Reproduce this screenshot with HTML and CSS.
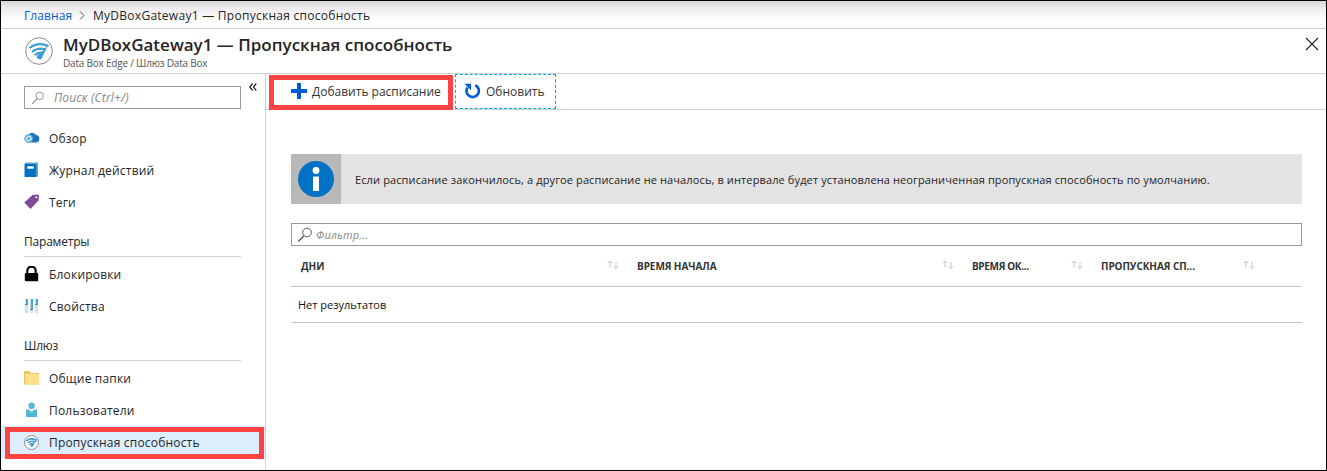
FILE: index.html
```html
<!DOCTYPE html>
<html lang="ru">
<head>
<meta charset="utf-8">
<title>MyDBoxGateway1 — Пропускная способность</title>
<link rel="stylesheet" href="styles.css">
</head>
<body>
<svg class="defs" width="0" height="0">
  <symbol id="search" viewBox="0 0 16 16"><circle cx="10" cy="5.5" r="4.3" fill="none" stroke="currentColor"/><path d="M7 8.8L1.3 14.5" fill="none" stroke="currentColor" stroke-width="1.3"/></symbol>
  <symbol id="gateway" viewBox="0 0 28 28"><circle cx="14" cy="14" r="13.3" fill="#fff" stroke="#8c8c8c"/><g fill="none" stroke="#3a9fd0" stroke-width="2.2"><path d="M4.500 11Q13 4.500 23.500 9"/><path d="M7 14.800Q13 9.800 21 12.500"/><path d="M9.800 18.200Q13.300 14.500 18.500 16"/></g><path d="M23 7.500L17.300 20.200a2.700 2.700 0 1 1-4.200-2.600l2.900-1.600z" fill="#3a9fd0"/></symbol>
  <symbol id="sort" viewBox="0 0 12 10"><path d="M3 7.5V1M.7 3.3L3 1l2.3 2.3M9 2v6.500M6.700 6.200L9 8.500l2.300-2.300" fill="none" stroke="#c8c8c8"/></symbol>
</svg>
<div class="window">
  <nav class="crumbs"><a class="home">Главная</a><svg class="sep" width="6" height="9" viewBox="0 0 6 9"><path d="M1 .5l4 4-4 4" fill="none" stroke="#555"/></svg><span class="here">MyDBoxGateway1 — Пропускная способность</span></nav>
  <header class="header">
    <svg class="logo" width="28" height="28"><use href="#gateway"/></svg>
    <div class="titles"><h1>MyDBoxGateway1 — Пропускная способность</h1><p>Data Box Edge / Шлюз Data Box</p></div>
    <svg class="close" width="14" height="14" viewBox="0 0 14 14"><path d="M1 1l12 12M13 1L1 13" stroke="#222" stroke-width="1.1"/></svg>
  </header>
  <div class="body">
    <aside class="side">
      <div class="searchrow">
        <div class="search"><svg width="14" height="14"><use href="#search"/></svg><span>Поиск (Ctrl+/)</span></div>
        <svg class="collapse" width="8" height="8" viewBox="0 0 8 8"><path d="M3.700.5L.8 4l2.900 3.500M7.300.5L4.400 4l2.900 3.500" fill="none" stroke="#222" stroke-width="1.200"/></svg>
      </div>
      <ul class="menu first">
        <li><svg width="16" height="16" viewBox="0 0 16 16"><path d="M5 12.500a4 4 0 0 1-.5-8A4.500 4.500 0 0 1 12 5a3.800 3.800 0 0 1 .3 7.500z" fill="#1e72bd"/><circle cx="4.700" cy="8.500" r="4.300" fill="#59b4d9"/><circle cx="4.700" cy="8.500" r="2.300" fill="none" stroke="#fff" stroke-width="1.500" stroke-dasharray="1.400 .7"/></svg><span>Обзор</span></li>
        <li><svg width="16" height="16" viewBox="0 0 16 16"><path d="M2.500.5H14V14.500H2.500z" fill="#68a5cf"/><path d="M.5 2h11.800v13H.5z" fill="#0072c6"/><path d="M.5 2L2.500.5V2z" fill="#0072c6"/><path d="M3.200 4.300h6.500v2.400H3.200z" fill="#fff"/></svg><span>Журнал действий</span></li>
        <li><svg width="16" height="16" viewBox="0 0 16 16"><path d="M.3 8.500L8.500 1l5-.5q1.500 0 1.500 1.500l-.5 4.500-8 8.500z" fill="#804998"/><circle cx="12.300" cy="3.200" r="1" fill="#fff"/></svg><span>Теги</span></li>
      </ul>
      <h2>Параметры</h2>
      <ul class="menu">
        <li><svg width="16" height="16" viewBox="0 0 16 16"><path d="M3.300 8V4.800a4.200 4.200 0 0 1 8.400 0V8" fill="none" stroke="#000" stroke-width="2.100"/><rect x=".8" y="7" width="13.400" height="8.300" rx="1" fill="#000"/></svg><span>Блокировки</span></li>
        <li><svg width="16" height="16" viewBox="0 0 16 16"><path d="M1 1H4v14H1zM6 1H9v14H6zM11 1H14v14H11z" fill="#c5e5f2"/><path d="M2 1h2v5H2zM7 1h2v10H7zM12 1h2v5h-2z" fill="#4aa8cf"/><path d="M1 6h3v1H1zM6 11h3v1H6zM11 6h3v1h-3z" fill="#808080"/></svg><span>Свойства</span></li>
      </ul>
      <h2>Шлюз</h2>
      <ul class="menu">
        <li><svg width="16" height="16" viewBox="0 0 16 16"><path d="M0 1h5.500l1 1.800H15V14.500H0z" fill="#e8c667"/><path d="M1.200 3.800h13.800v10.700H1.200z" fill="#ffdf8c"/></svg><span>Общие папки</span></li>
        <li><svg width="16" height="16" viewBox="0 0 16 16"><path d="M2 7.500h2.800L7.500 10l2.700-2.500H13V15H2z" fill="#59b4d9"/><circle cx="7.600" cy="3.800" r="3.200" fill="#59b4d9"/></svg><span>Пользователи</span></li>
        <li class="active"><svg width="15" height="15" viewBox="0 0 15 15"><circle cx="7.500" cy="7.500" r="7" fill="#fff" stroke="#8c8c8c"/><path d="M2 6Q7.500 2 13 5.500M3.800 8Q7.500 5 11.500 7.300M5.500 10Q7.500 8 9.500 9.300" fill="none" stroke="#3a9fd0" stroke-width="1.500"/><path d="M12.300 5L8.800 11.200a1.200 1.200 0 0 1-2-1.500z" fill="#3a9fd0"/></svg><span>Пропускная способность</span><i class="mark"></i></li>
      </ul>
    </aside>
    <main class="main">
      <div class="toolbar">
        <button class="add"><svg width="16" height="16" viewBox="0 0 16 16"><path d="M6 0h4v6h6v4h-6v6H6v-6H0V6h6z" fill="#015cda"/></svg><span>Добавить расписание</span></button>
        <button class="refresh"><svg width="16" height="17" viewBox="0 0 16 17"><path d="M11.300 2.200A6.200 6.200 0 1 1 3.500 4.400" fill="none" stroke="#015cda" stroke-width="2.700"/><path d="M.4.700H7V7.300z" fill="#015cda"/></svg><span>Обновить</span></button>
      </div>
      <div class="content">
        <div class="info"><div class="infoicon"><svg width="36" height="36" viewBox="0 0 36 36"><circle cx="18" cy="18" r="18" fill="#0072c6"/><circle cx="18" cy="9.500" r="3.400" fill="#fff"/><path d="M15 15.500h6V30h-6z" fill="#fff"/></svg></div><span>Если расписание закончилось, а другое расписание не началось, в интервале будет установлена неограниченная пропускная способность по умолчанию.</span></div>
        <div class="filter"><svg width="16" height="16"><use href="#search"/></svg><span>Фильтр...</span></div>
        <div class="thead">
          <div><span>ДНИ</span><svg width="12" height="10"><use href="#sort"/></svg></div>
          <div><span>ВРЕМЯ НАЧАЛА</span><svg width="12" height="10"><use href="#sort"/></svg></div>
          <div><span class="tight">ВРЕМЯ ОК...</span><svg width="12" height="10"><use href="#sort"/></svg></div>
          <div><span>ПРОПУСКНАЯ СП...</span><svg width="12" height="10"><use href="#sort"/></svg></div>
        </div>
        <div class="empty"><span>Нет результатов</span></div>
      </div>
    </main>
  </div>
</div>
</body>
</html>
```
FILE: styles.css
```css
* { box-sizing: border-box; }
body { margin: 0; font-family: "Open Sans", "Noto Sans", sans-serif; font-size: 12px; color: #252525; background: #fff; overflow: hidden; }
h1, h2, p, ul { margin: 0; padding: 0; font-weight: 400; }
ul { list-style: none; }
svg { display: block; flex: none; }
span, h1, h2, p { white-space: nowrap; }
.defs { position: absolute; }
.window { width: 1327px; height: 471px; border: 1px solid #000; display: flex; flex-direction: column; }
.crumbs { height: 28px; flex: none; padding: 2px 0 0 23px; display: flex; align-items: center; border-bottom: 1px solid #d0d0d0; background: linear-gradient(#d8d4d8, #efedef 8px, #fff 20px); }
.home { color: #015cda; width: 55px; letter-spacing: .1px; }
.sep { margin-right: 8px; }
.here { letter-spacing: .27px; }
.header { height: 45px; flex: none; padding: 0 7px 0 24px; display: flex; border-bottom: 1px solid #d0d0d0; }
.logo { margin-top: 8px; }
.titles { flex: 1; padding: 4px 0 0 10px; }
h1 { font-size: 17px; font-weight: 600; line-height: 24px; }
.titles p { font-size: 10px; line-height: 13px; color: #555; letter-spacing: -.21px; }
.close { margin-top: 8px; }
.body { flex: 1; display: flex; min-height: 0; }
.side { width: 265px; border-right: 1px solid #d0d0d0; }
.searchrow { display: flex; padding: 12px 0 0 23px; gap: 8px; }
.search { width: 217px; height: 23px; border: 1px solid #999; display: flex; align-items: center; padding-left: 6px; gap: 9px; color: #888; font-style: italic; letter-spacing: .15px; }
.collapse { margin-top: -3px; }
.menu li { height: 32px; display: flex; align-items: center; padding-left: 23px; gap: 9px; letter-spacing: .19px; }
.menu.first { margin-top: 13px; }
.side h2 { margin: 15px 24px 1px 23px; height: 24px; line-height: 18px; border-bottom: 1px solid #d0d0d0; font-size: 12px; font-weight: 500; letter-spacing: -.2px; }
.menu .active { position: relative; background: #dceeff; gap: 10px; }
.mark { position: absolute; left: 4px; top: 1px; width: 259px; height: 32px; border: 5px solid #ff4343; }
.main { flex: 1; min-width: 0; }
.toolbar { height: 36px; border-bottom: 1px solid #d0d0d0; display: flex; gap: 2px; padding-left: 3px; }
.toolbar button { font: inherit; color: #333; background: none; display: flex; align-items: center; margin: 0; white-space: nowrap; }
.toolbar .add { width: 184px; height: 35px; margin-top: 1px; border: 5px solid #ff4343; padding: 0 0 2px 17px; gap: 5px; }
.toolbar .add svg { margin-top: -1px; }
.toolbar .refresh { width: 101px; height: 35px; border: 1px dashed #00abec; padding: 0 0 0 8px; gap: 6px; }
.content { padding: 44px 24px 0 25px; }
.info { height: 50px; background: #e3e3e3; display: flex; align-items: center; gap: 14px; font-size: 11px; letter-spacing: .12px; }
.infoicon { width: 50px; height: 50px; background: #b8b8b8; display: grid; place-items: center; }
.filter { margin-top: 19px; height: 23px; border: 1px solid #999; display: flex; align-items: center; padding-left: 5px; gap: 3px; font-size: 11px; font-style: italic; color: #888; letter-spacing: .2px; }
.filter svg { color: #555; }
.thead { height: 41px; border-bottom: 1px solid #c8c8c8; display: grid; grid-template-columns: 336px 335px 129px 172px; padding-left: 10px; font-size: 10px; font-weight: 700; color: #333; letter-spacing: -.07px; }
.tight { letter-spacing: -.35px; }
.thead div { display: flex; align-items: center; justify-content: space-between; padding-right: 18px; }
.thead svg { margin-bottom: 2px; }
.empty { height: 36px; border-bottom: 1px solid #c8c8c8; display: flex; align-items: center; padding-left: 7px; font-size: 11px; color: #111; }
```
